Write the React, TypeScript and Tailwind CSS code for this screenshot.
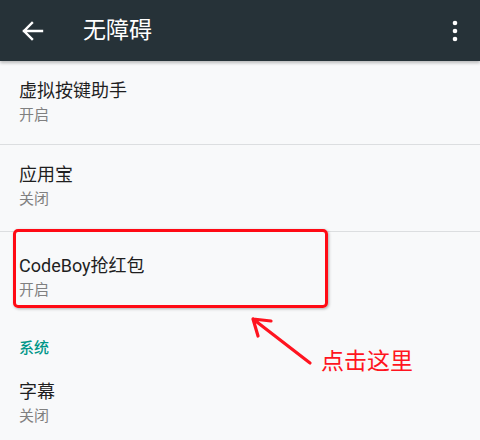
import React from 'react';

const FONT = 'Roboto, "Noto Sans CJK SC", "Noto Sans", sans-serif';

interface Setting {
  title: string;
  state: string;
  pad: string;
  divider: boolean;
}

const Item: React.FC<Setting> = ({ title, state, pad, divider }) => (
  <div className={`${pad} pl-[19px] ${divider ? 'border-b border-[#dcdee0]' : ''}`}>
    <div className="text-[18px] leading-[20px] text-[#1f1f1f]">{title}</div>
    <div className="mt-[4px] text-[15px] leading-[20px] text-[#808080]">{state}</div>
  </div>
);

const App: React.FC = () => {
  return (
    <div className="relative w-[480px] h-[440px] overflow-hidden bg-[#f8f9fa]" style={{ fontFamily: FONT }}>
      {/* Toolbar */}
      <header className="relative z-10 flex h-[61px] items-center bg-[#263238] shadow-[0_2px_3px_rgba(0,0,0,0.25)]">
        <svg width="28" height="28" viewBox="0 0 28 28" className="ml-[19px]">
          <path d="M5 14H23M13 6L5 14L13 22" stroke="#fff" strokeWidth="2.4" fill="none" strokeLinecap="square" />
        </svg>
        <h1 className="ml-[36px] text-[23px] leading-[28px] font-normal text-white">无障碍</h1>
        <svg width="8" height="24" viewBox="0 0 8 24" className="ml-auto mr-[21px]">
          <circle cx="4" cy="4" r="2.3" fill="#fff" />
          <circle cx="4" cy="12" r="2.3" fill="#fff" />
          <circle cx="4" cy="20" r="2.3" fill="#fff" />
        </svg>
      </header>

      <main>
        <Item title="虚拟按键助手" state="开启" pad="pt-[20px] pb-[19px]" divider />
        <Item title="应用宝" state="关闭" pad="pt-[20px] pb-[22px]" divider />
        <Item title="CodeBoy抢红包" state="开启" pad="pt-[24px] pb-[16px]" divider={false} />
        <div className="pl-[19px] pt-[22px] text-[15px] leading-[20px] font-medium text-[#009688]">系统</div>
        <Item title="字幕" state="关闭" pad="pt-[24px] pb-[16px]" divider={false} />
      </main>

      {/* annotation overlay */}
      <div className="absolute left-[13px] top-[229px] w-[315px] h-[79px] rounded-[5px] border-[3px] border-[#ff0a14] shadow-[1px_1px_3px_rgba(0,0,0,0.3)]" />
      <svg width="80" height="60" viewBox="0 0 80 60" className="absolute left-[245px] top-[311px]">
        <path d="M65 52L8 8M8 8L26 10M8 8L13 25" stroke="#ff1420" strokeWidth="3.2" fill="none" strokeLinecap="round" />
      </svg>
      <div className="absolute left-[321px] top-[346px] text-[23px] leading-[32px] text-[#ff1420]">点击这里</div>
    </div>
  );
};

export default App;
